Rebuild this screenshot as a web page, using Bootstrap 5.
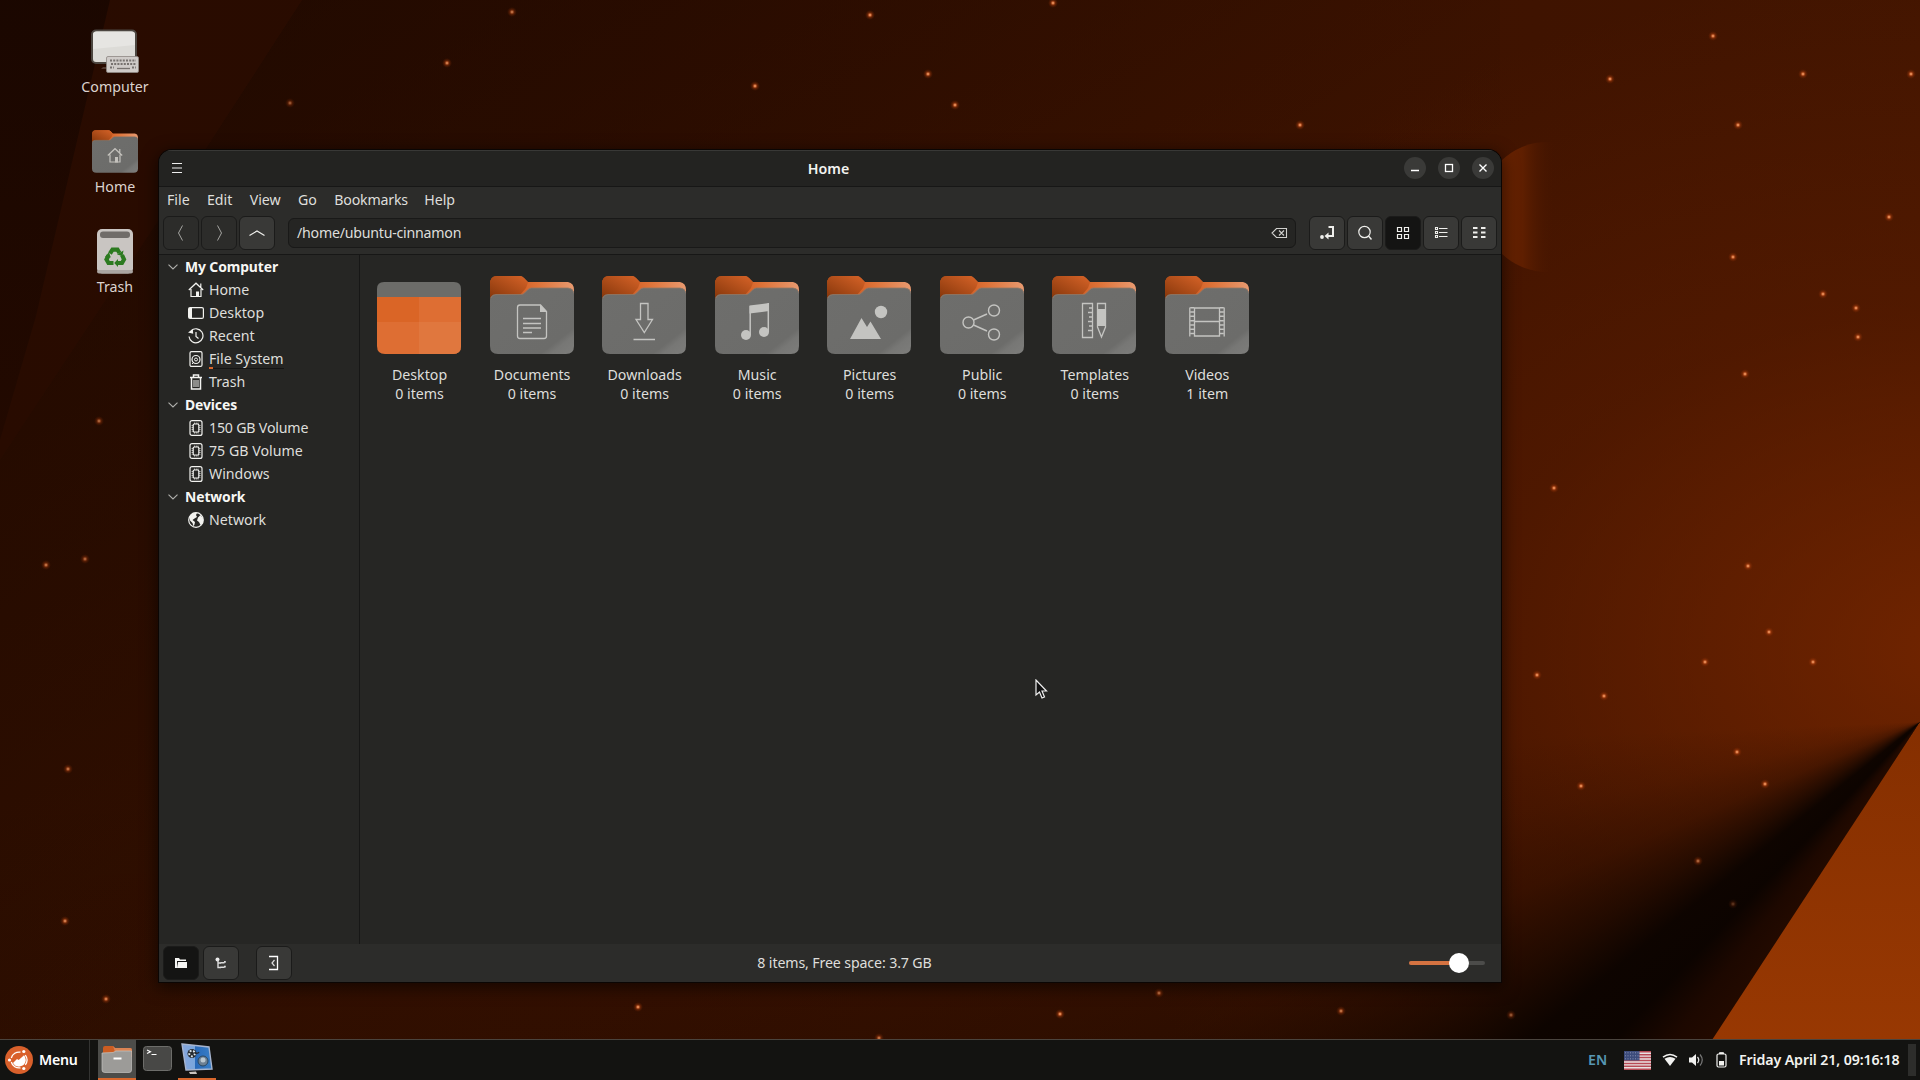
<!DOCTYPE html>
<html lang="en">
<head>
<meta charset="utf-8">
<title>Home</title>
<link href="https://cdn.jsdelivr.net/npm/bootstrap@5.3.0/dist/css/bootstrap.min.css" rel="stylesheet">
<style>
:root{--line:#171716;--bar:#2c2c2a;--pane:#262624;--accent:#d9672c}
html,body{height:100%;overflow:hidden}
body{font-family:"Noto Sans","Open Sans",sans-serif;font-size:14.2px;line-height:19px;color:#dededb;background:#350f00;width:1920px;height:1080px}
svg{display:block;flex:none}
.wallpaper,.crease{position:absolute;inset:0;width:1920px;height:1040px}
.wallpaper{z-index:-3;background:
 radial-gradient(ellipse 950px 680px at 1960px 650px,rgba(130,42,0,.72),rgba(110,34,0,.32) 50%,transparent),
 linear-gradient(90deg,#310f00 0,#361000 35%,#3b1200 60%,#3f1300 80%,#431500)}
.crease{z-index:-2;background:conic-gradient(at 1920px 722px,transparent 212deg,rgba(32,9,0,.95) 213deg,rgba(26,7,0,.95) 218deg,rgba(10,3,0,.97) 224deg,rgba(10,3,0,.95) 231deg,rgba(16,5,0,.7) 238deg,rgba(20,6,0,.35) 247deg,rgba(20,6,0,.13) 257deg,transparent 268deg)}
.scenery{position:absolute;inset:0;z-index:-1}
.launchers{position:absolute;left:75px;top:29px;width:80px}
.launcher{height:100px;color:#dcd3cf}
.launcher .pic{height:48px}
.win{position:absolute;left:159px;top:150px;width:1342px;height:832px;background:var(--pane);border-radius:13px 13px 0 0;box-shadow:0 0 0 1px #0b0604,0 4px 16px 2px rgba(0,0,0,.55);overflow:hidden}
.titlebar{height:37px;background:#232321;border-bottom:1px solid var(--line);box-shadow:inset 0 1px #383836;color:#f3f3f0;padding:0 7px 0 8px}
.titleside{width:116px;gap:12px}
.circ{width:22px;height:22px;border-radius:50%;background:#3a3a38}
.upper{background:var(--bar);height:68px;border-bottom:1px solid var(--line)}
.menus{height:26px;padding:0 0 2px 8px;gap:17.3px}
.menus span:last-child{margin-left:-1px}
.menus span:nth-child(n+2):nth-child(-n+4){position:static}
.tight{letter-spacing:-.2px}
.tools{height:41px;padding:3px 4px 0}
.btnrow{gap:2px}
.tbtn{width:36px;height:34px;border:1px solid #1b1b1a;border-radius:6px;background:#393937;color:#efefec;display:flex;align-items:center;justify-content:center;padding:0}
.tbtn.off{background:#2c2c2a;color:#a4a4a1}
.tbtn.on{background:#141413}
.paneltoggle{margin-left:17px}
.pathbox{height:30px;border:1px solid #191918;border-radius:6px;background:#252523;margin:2px 13px 0;padding:0 7px 0 8px;letter-spacing:-.24px}
.pathbox span{padding-bottom:2px}
.side{width:201px;border-right:1px solid var(--line)}
.srow{height:23px;display:flex;align-items:center;padding-left:29px}
.srow svg{margin-right:5px;color:#f2f2ef}
.shead{height:23px;display:flex;align-items:center;padding-left:9px;font-weight:700;color:#f7f7f4;font-size:13.9px;letter-spacing:-.1px}
.shead svg{margin-right:7px;color:#b0b0ad}
.usage{border-bottom:1px solid #151514;line-height:18px;margin-top:1px}
.usage:before{content:"";position:absolute;width:4px;height:2px;background:var(--accent);margin-top:17px}
.files{padding:21px 0 0 2.8px}
.file{width:112.54px;text-align:center}
.file svg{margin:0 auto 11px}
.caption{padding-left:1px}
.statusbar{height:38px;background:var(--bar);padding:0 16px 0 4px}
.summary{padding:0 12px 2px 0;letter-spacing:-.13px}
.zoomer{width:76px;height:20px}
.panel{position:absolute;left:0;top:1039px;width:1920px;height:41px;background:#131311;border-top:1px solid #4a443e}
.logo{margin-left:5px}
.menulabel{width:50px;margin-left:6px;padding-bottom:1px;letter-spacing:-.3px}
.divider{width:9px;border-left:1px solid #343432}
.task{width:38px;height:40px;display:flex;align-items:center;justify-content:center}
.task.wide{width:42px}
.task.open{border-bottom:2px solid var(--accent)}
.task.focus{background:#4c4c49}
.bold{font-weight:600}
.lang{color:#5797b4;width:36px;padding-bottom:1px}
.clock{width:169px;margin-left:12px;color:#f3f3f0;white-space:nowrap;letter-spacing:-.11px;padding-bottom:1px}
.gap11{margin-left:11px}
.peek{width:8px;height:32px;background:#2d2d2b;margin-right:4px}
.cursor{position:absolute;left:1035px;top:679px}
</style>
<script src="https://cdn.jsdelivr.net/npm/bootstrap@5.3.0/dist/js/bootstrap.bundle.min.js"></script>
</head>
<body>
<div class="wallpaper"></div>
<div class="crease"></div>
<svg class="scenery" width="1920" height="1040" viewBox="0 0 1920 1040">
 <defs>
  <radialGradient id="glow"><stop offset="0" stop-color="#ffc28a"/><stop offset=".22" stop-color="#e0703a" stop-opacity=".9"/><stop offset=".5" stop-color="#b0410f" stop-opacity=".42"/><stop offset="1" stop-color="#7a2500" stop-opacity="0"/></radialGradient>
  <linearGradient id="disc" x1="1500" x2="1556" y1="0" y2="0" gradientUnits="userSpaceOnUse"><stop offset="0" stop-color="#6a2300"/><stop offset=".4" stop-color="#622000" stop-opacity=".9"/><stop offset="1" stop-color="#451500" stop-opacity="0"/></linearGradient>
  <linearGradient id="fold" x1="0" y1="0" x2="0" y2="1"><stop offset="0" stop-color="#852f00"/><stop offset="1" stop-color="#983802"/></linearGradient>
  <linearGradient id="shade" x1="100" y1="100" x2="560" y2="800" gradientUnits="userSpaceOnUse"><stop offset="0" stop-color="#0a0200" stop-opacity=".42"/><stop offset="1" stop-color="#0a0200" stop-opacity="0"/></linearGradient>
  <linearGradient id="shade2" x1="0" y1="0" x2="0" y2="1"><stop offset="0" stop-color="#0a0200" stop-opacity=".45"/><stop offset="1" stop-color="#0a0200" stop-opacity=".2"/></linearGradient>
 </defs>
 <path d="M302 0 205 150 0 460V1040H1500V0Z" fill="url(#shade)"/>
 <path d="M0 0H302L205 150 0 460Z" fill="#0a0200" opacity=".22"/>
 <path d="M0 0H110L36 316 0 440Z" fill="url(#shade2)"/>
 <circle cx="1547" cy="207" r="65" fill="url(#disc)"/>
 <path d="M1920 722V1040H1712Z" fill="url(#fold)"/>
 <g id="stars"></g>
</svg>

<svg width="0" height="0" class="position-absolute">
 <defs>
  <linearGradient id="tab"><stop offset="0" stop-color="#b34f17"/><stop offset=".35" stop-color="#d26027"/><stop offset=".55" stop-color="#dd7136"/><stop offset="1" stop-color="#e89a70"/></linearGradient>
  <linearGradient id="tabdark" x1="0" y1="1" x2=".8" y2="0"><stop offset="0" stop-color="#7e3208"/><stop offset="1" stop-color="#cf5f25"/></linearGradient>
  <linearGradient id="front" x1="0" y1="0" x2="1" y2="1"><stop offset="0" stop-color="#6e6e6c"/><stop offset=".8" stop-color="#6c6c6a"/><stop offset=".86" stop-color="#777775"/><stop offset="1" stop-color="#7d7d7b"/></linearGradient>
  <symbol id="folder" viewBox="0 0 84 78">
   <path d="M0 8Q0 0 7 0H30Q32 0 34 2L38 6H78Q84 7 84 14V40H0Z" fill="url(#tab)"/>
   <path d="M0 8Q0 0 7 0H30Q32 0 34 2L38 6.500 36 12 30 19V26H0Z" fill="url(#tabdark)"/>
   <path d="M0 24Q0 18.500 6 18.500H31Q33 18.500 34.500 17L38 13.500Q39.500 12 41.500 12H78Q84 12 84 18V70Q84 78 76 78H8Q0 78 0 70Z" fill="url(#front)"/>
   <path d="M1 22Q2 18.500 6 18.500H31Q33 18.500 34.500 17L38 13.500Q39.500 12 41.500 12H78Q82 12 83.500 16" fill="none" stroke="#8f7868" stroke-width=".8"/>
  </symbol>
  <symbol id="house" viewBox="0 0 16 16"><path d="M.8 8 8 1.200 15.200 8M3 7v7.500h10V7M12.800 1.500v4" fill="none" stroke="currentColor" stroke-width="1.200"/><path d="M8 9.500h3V15H8z" fill="currentColor"/></symbol>
  <symbol id="drive" viewBox="0 0 16 16"><rect x="2" y=".6" width="12" height="14.800" rx="2" fill="none" stroke="currentColor" stroke-width="1.200"/><rect x="5.200" y="4" width="5.600" height="8" rx="1" fill="none" stroke="currentColor" stroke-width="1.200"/><path d="M6 3.200h4.500M6 12.900h4.500" stroke="currentColor" stroke-dasharray="1 .8"/><path d="M4.200 5v6.500M11.900 5v6.500" stroke="currentColor" stroke-dasharray="1 1"/></symbol>
  <symbol id="down" viewBox="0 0 10 6"><path d="M.5.700 5 5 9.500.700" fill="none" stroke="currentColor" stroke-width="1.100"/></symbol>
 </defs>
</svg>

<div class="launchers d-flex flex-column">
 <div class="launcher text-center"><div class="pic d-flex justify-content-center">
  <svg width="50" height="46" viewBox="0 0 50 46"><path d="M13 38h20v2H11Z" fill="#513a30"/><rect x="2" y="1.500" width="44" height="32.500" rx="4" fill="#dcdbd7" stroke="#4c4640" stroke-width="2"/><path d="M3 6Q3 2.500 7 2.500H41Q45 2.500 45 6V16L3 20Z" fill="#e6e5e2"/><rect x="16.500" y="27.500" width="32" height="16" rx="1.500" fill="#cfcbc8" stroke="#8e8884" stroke-width=".8"/><path d="M20 31.500h26M21 35h25M20 38.500h4M42 38.500h4" stroke="#77726f" stroke-width="1.800" stroke-dasharray="2 1.200"/><path d="M27 39.500h13" stroke="#77726f" stroke-width="1.300"/></svg>
 </div><div>Computer</div></div>
 <div class="launcher text-center"><div class="pic d-flex justify-content-center">
  <svg width="46" height="44"><use href="#folder" y="1" width="46" height="43"/><g color="#c3c1bc"><use href="#house" x="15" y="18.500" width="16" height="16"/></g></svg>
 </div><div>Home</div></div>
 <div class="launcher text-center"><div class="pic d-flex justify-content-center">
  <svg width="38" height="46" viewBox="0 0 38 46"><rect x="1" y="0" width="36" height="44.500" rx="5" fill="#c9c5c2"/><rect x="1" y="41" width="36" height="3.500" rx="2" fill="#aaa5a1"/><rect x="4" y="2.500" width="30" height="6.500" rx="3" fill="#706c69"/><g fill="none" stroke="#2c7a20" stroke-width="4.200"><path d="m14 24.500 2.500-3.800h5l2 3.300"/><path d="m26 26 2 4.500-2 3.500h-4.500"/><path d="M17.500 34h-5l-2-3.500 2-4"/></g><path d="m21 25.500 5.500 1.500 1-5.500zM22 30l-3.800 4 3.800 4zM9 28l5.700.500-1.700-5.500z" fill="#2c7a20"/></svg>
 </div><div>Trash</div></div>
</div>

<div class="win d-flex flex-column">
 <div class="titlebar d-flex align-items-center">
  <div class="titleside"><svg width="20" height="12" viewBox="0 0 20 12"><path d="M5 1.500h10M5 6h10M5 10.500h10" stroke="#eee" stroke-width="1.100"/></svg></div>
  <div class="flex-grow-1 text-center bold pe-1">Home</div>
  <div class="titleside d-flex justify-content-end">
   <div class="circ"><svg width="22" height="22"><path d="M7 13.500h8" stroke="#fff" stroke-width="1.300"/></svg></div>
   <div class="circ"><svg width="22" height="22"><rect x="7.500" y="7.500" width="7" height="7" fill="none" stroke="#fff" stroke-width="1.300"/></svg></div>
   <div class="circ"><svg width="22" height="22"><path d="m7.500 7.500 7 7m0-7-7 7" stroke="#fff" stroke-width="1.400"/></svg></div>
  </div>
 </div>
 <div class="upper">
  <div class="menus d-flex align-items-center"><span>File</span><span>Edit</span><span>View</span><span>Go</span><span class="tight">Bookmarks</span><span>Help</span></div>
  <div class="tools d-flex">
   <div class="btnrow d-flex">
    <button class="tbtn off"><svg width="8" height="18"><path d="M5.500 1.500 1.500 9l4 7.500" fill="none" stroke="currentColor"/></svg></button>
    <button class="tbtn off"><svg width="8" height="18"><path d="m2.500 1.500 4 7.500-4 7.500" fill="none" stroke="currentColor"/></svg></button>
    <button class="tbtn"><svg width="16" height="8"><path d="M.5 6.500 8 2l7.500 4.500" fill="none" stroke="currentColor" stroke-width="1.200"/></svg></button>
   </div>
   <div class="pathbox flex-grow-1 d-flex align-items-center justify-content-between"><span>/home/ubuntu-cinnamon</span>
    <svg width="17" height="12"><path d="M5.500 1.500h10v9h-10L1 6ZM8 3.500l5 5m0-5-5 5" fill="none" stroke="#d0d0cd" stroke-width="1.100"/></svg></div>
   <div class="btnrow d-flex">
    <button class="tbtn"><svg width="16" height="16"><path d="M9.500 2H14v9H7.500" fill="none" stroke="currentColor" stroke-width="2"/><path d="m9.500 7.500-4 3.500 4 3.500z" fill="currentColor"/><circle cx="3" cy="12" r="1.900" fill="currentColor"/></svg></button>
    <button class="tbtn"><svg width="16" height="16"><circle cx="7.500" cy="7" r="5.700" fill="none" stroke="currentColor" stroke-width="1.200"/><path d="m11.500 11 3 3.500" stroke="currentColor" stroke-width="1.400"/></svg></button>
    <button class="tbtn on"><svg width="16" height="16"><path d="M2.500 2.500h4v4h-4zM9.500 2.500h4v4h-4zM2.500 9.500h4v4h-4zM9.500 9.500h4v4h-4z" fill="none" stroke="currentColor" stroke-width="1.200"/></svg></button>
    <button class="tbtn"><svg width="16" height="16"><path d="M2.500 2.500h2v2h-2zM2.500 6.500h2v2h-2zM2.500 10.500h2v2h-2zM6 3.500h8.500M6 7.500h8.500M6 11.500h8.500" fill="none" stroke="currentColor" stroke-width="1.100"/></svg></button>
    <button class="tbtn"><svg width="16" height="16"><path d="M2 3h4.500M10 3h4.500M2 7.500h4.500M10 7.500h4.500M2 12h4.500M10 12h4.500" stroke="currentColor" stroke-width="1.800"/></svg></button>
   </div>
  </div>
 </div>
 <div class="d-flex flex-grow-1">
  <div class="side">
   <div class="shead"><svg width="10" height="6"><use href="#down"/></svg><span>My Computer</span></div>
   <div class="srow"><svg width="16" height="16"><use href="#house"/></svg>Home</div>
   <div class="srow"><svg width="16" height="16"><rect x=".6" y="2.600" width="14.800" height="10.800" rx="1.500" fill="none" stroke="currentColor" stroke-width="1.200"/><path d="M1 3h3v10H1z" fill="currentColor"/></svg>Desktop</div>
   <div class="srow"><svg width="16" height="16"><path d="M3 2.800A7 7 0 1 1 1 8.500" fill="none" stroke="currentColor" stroke-width="1.200"/><path d="M8 4v4.500l2.500 2" fill="none" stroke="currentColor" stroke-width="1.200"/><path d="M0 4.500 4.800 1l.4 4.700z" fill="currentColor"/></svg>Recent</div>
   <div class="srow"><svg width="16" height="16"><rect x="2" y=".6" width="12" height="14.800" rx="1.500" fill="none" stroke="currentColor" stroke-width="1.200"/><circle cx="8" cy="8.500" r="4" fill="none" stroke="currentColor" stroke-width="1.200"/><circle cx="8" cy="8.500" r="1.500" fill="none" stroke="currentColor"/><path d="m4 13 2-2" stroke="currentColor"/></svg><span class="usage">File System</span></div>
   <div class="srow"><svg width="16" height="16"><path d="M2 3.500h12M5.500 3V1h5v2M3.500 4v11h9V4" fill="none" stroke="currentColor" stroke-width="1.500"/><path d="M6 6v7M8 6v7M10 6v7" stroke="currentColor"/></svg>Trash</div>
   <div class="shead"><svg width="10" height="6"><use href="#down"/></svg><span>Devices</span></div>
   <div class="srow"><svg width="16" height="16"><use href="#drive"/></svg><span class="tight">150 GB Volume</span></div>
   <div class="srow"><svg width="16" height="16"><use href="#drive"/></svg>75 GB Volume</div>
   <div class="srow"><svg width="16" height="16"><use href="#drive"/></svg>Windows</div>
   <div class="shead"><svg width="10" height="6"><use href="#down"/></svg><span>Network</span></div>
   <div class="srow"><svg width="16" height="16"><circle cx="8" cy="8" r="7.300" fill="#262624" stroke="currentColor" stroke-width="1.200"/><path d="M1.500 5Q4 0 9 1L8 3 9 5 6.500 6.500 4.500 8 7 10 6.500 12.500 5.500 14.500 4.500 11 2 8.500ZM10 5.500 12.500 3 15 6.500V11L12.500 13 11 10 9 8.500Z" fill="currentColor"/></svg>Network</div>
  </div>
  <div class="files d-flex align-items-start">
   <div class="file"><svg width="84" height="78"><path d="M0 13Q0 6 7 6H77Q84 6 84 13V24H0Z" fill="#6c6c69"/><path d="M0 21H84V70Q84 78 76 78H8Q0 78 0 70Z" fill="#de6e33"/><path d="M0 21H42V46H0Z" fill="#da6526"/><path d="M42 46H84V70Q84 78 76 78H42Z" fill="#e0773e"/></svg><div class="caption">Desktop<br>0 items</div></div>
   <div class="file"><svg width="84" height="78"><use href="#folder"/><g fill="none" stroke="#c4c4c1" stroke-width="1.300"><path d="M50.500 29H30q-2.500 0-2.500 2.500v28.500q0 2.500 2.500 2.500h24q2.500 0 2.500-2.500V35.500ZM33 42.500h18M33 47.500h18M33 52h18M33 56.500h9"/></g><path d="M50 28.500v7.500h7z" fill="#c4c4c1"/></svg><div class="caption">Documents<br>0 items</div></div>
   <div class="file"><svg width="84" height="78"><use href="#folder"/><path d="M38.500 27.500h7.500v16h4.500L42.300 56.500 34 43.500h4.500ZM31.500 63.500h21.500" fill="none" stroke="#c4c4c1" stroke-width="1.300"/></svg><div class="caption">Downloads<br>0 items</div></div>
   <div class="file"><svg width="84" height="78"><use href="#folder"/><g fill="#c4c4c1"><circle cx="31" cy="59" r="5"/><circle cx="49" cy="56" r="5"/><path d="M34.500 29.500 54 27v8L34.500 37.500Z"/></g><path d="M35.200 59V30M53.300 56V27" stroke="#c4c4c1" stroke-width="1.500"/></svg><div class="caption">Music<br>0 items</div></div>
   <div class="file"><svg width="84" height="78"><use href="#folder"/><g fill="#c4c4c1"><circle cx="54" cy="36" r="6.200"/><path d="M23 63 34.500 42 40 51 43.500 45.500 54 63Z"/></g></svg><div class="caption">Pictures<br>0 items</div></div>
   <div class="file"><svg width="84" height="78"><use href="#folder"/><g fill="none" stroke="#c4c4c1" stroke-width="1.400"><circle cx="28.500" cy="46.500" r="5.500"/><circle cx="54" cy="34.500" r="5.500"/><circle cx="54" cy="58.500" r="5.500"/><path d="M33.500 44 47 38M33.500 49 47 55"/></g></svg><div class="caption">Public<br>0 items</div></div>
   <div class="file"><svg width="84" height="78"><use href="#folder"/><g fill="none" stroke="#c4c4c1" stroke-width="1.300"><path d="M30.500 27.500h10v34h-10zM40 32h-3M40 36.500h-4M40 41h-3M40 45.500h-4M40 50h-3M40 54.500h-4M45.500 27.500h8V51L49.500 61 45.500 51Z"/></g><path d="M45 33h9v17h-9z" fill="#c4c4c1"/></svg><div class="caption">Templates<br>0 items</div></div>
   <div class="file"><svg width="84" height="78"><use href="#folder"/><g fill="none" stroke="#c4c4c1" stroke-width="1.300"><path d="M29.500 32h25v28h-25zM30 45.500h24M24.800 31.500v29M59.200 31.500v29"/><path d="M27.200 31v30M56.800 31v30" stroke-width="4" stroke-dasharray="1.500 2.800"/></g></svg><div class="caption">Videos<br>1 item</div></div>
  </div>
 </div>
 <div class="statusbar d-flex align-items-center">
  <button class="tbtn on"><svg width="14" height="12"><path d="M1 1h4l1 1.500h6V4H3v7H1Z" fill="#f5f5f3"/><path d="M4 5h9v6H3Z" fill="#f5f5f3"/></svg></button>
  <button class="tbtn ms-1"><svg width="12" height="12"><circle cx="2.500" cy="2.500" r="2" fill="#eee"/><path d="M3 3v7.500h3M3 6h3" stroke="#ddd" fill="none" stroke-width="1.400"/><path d="M5.500 5h4v1.500h-4zM5.500 9.500h4V11h-4zM9 4h1.800v1.800H9zM9 8.700h1.800v1.800H9z" fill="#ddd"/></svg></button>
  <button class="tbtn paneltoggle"><svg width="12" height="16"><path d="M1 1.500h8.500v13H1" fill="none" stroke="#fff" stroke-width="1.300"/><path d="M6.500 5 4 8l2.500 3" fill="none" stroke="#ddd" stroke-width="1.200"/></svg></button>
  <div class="summary flex-grow-1 text-center">8 items, Free space: 3.7 GB</div>
  <svg class="zoomer" viewBox="0 0 76 20"><path d="M2 10h72" stroke="#4c4c4a" stroke-width="4" stroke-linecap="round"/><path d="M2 10h44" stroke="#d57341" stroke-width="4" stroke-linecap="round"/><circle cx="50" cy="10" r="10" fill="#fff"/></svg>
 </div>
</div>

<svg class="cursor" width="13" height="21" viewBox="0 0 13 21"><path d="M1 1V16L4.500 13 7 19 9.500 18 7 12H11.500Z" fill="#111" stroke="#eee" stroke-width="1.200"/></svg>

<div class="panel d-flex align-items-center">
 <svg class="logo" width="28" height="28"><circle cx="14" cy="14" r="14" fill="#d9602b"/><path d="M6.300 12A8 8 0 0 1 15.500 6.200M20.300 9.200A8 8 0 0 1 20.300 18.800M15.500 21.800A8 8 0 0 1 6.300 16" fill="none" stroke="#fff" stroke-width="1.300"/><path d="m8 17 4-4 1.700 1L19 9.200A7 7 0 0 1 20.800 14 7 7 0 0 1 10 19.500Z" fill="#fff"/><circle cx="4.500" cy="14" r="1.600" fill="#fff"/><circle cx="18.800" cy="5.500" r="1.600" fill="#fff"/><circle cx="18.800" cy="22.500" r="1.600" fill="#fff"/></svg>
 <div class="menulabel bold text-white">Menu</div>
 <div class="divider h-100"></div>
 <div class="task open focus"><svg width="32" height="29" viewBox="0 0 32 29"><path d="M2 3Q2 1 4 1H12L14 3H29Q31 3 31 5V12H2Z" fill="#cc5d22"/><path d="M12 1 14 3H29Q31 3 31 5V7H14Z" fill="#db8454"/><path d="M1 8 12 7.500 15 6H30.500V25Q30.500 27.500 28 27.500H4Q1 27.500 1 25Z" fill="#9c9b98" stroke="#c4c3c0" stroke-width=".7"/><path d="M12.500 12.500h8v2h-8z" fill="#fff"/></svg></div>
 <div class="task wide pb-1"><svg width="29" height="25"><rect x=".5" y=".5" width="28" height="24" rx="3" fill="#484846" stroke="#6d6d6a"/><path d="m4 4 3.500 1.700L4 7.500M8.500 8.500h5" fill="none" stroke="#fff" stroke-width="1.100"/></svg></div>
 <div class="task open"><svg width="32" height="33" viewBox="0 0 32 33"><defs><linearGradient id="scr"><stop offset="0" stop-color="#86a5dc"/><stop offset=".42" stop-color="#79a6dc"/><stop offset=".44" stop-color="#2869b8"/><stop offset="1" stop-color="#397fc7"/></linearGradient></defs><path d="M1 1 28 4 31 26 5 27Z" fill="url(#scr)" stroke="#a7b5cf" stroke-width="1.400"/><circle cx="11" cy="10.500" r="4.500" fill="#262b30"/><circle cx="11" cy="10.500" r="2.800" fill="none" stroke="#dce7ee" stroke-width="2" stroke-dasharray="1.800 1.700"/><path d="M14 10q3 1 4-1" stroke="#252a33" fill="none" stroke-width="1.500"/><circle cx="22" cy="18" r="5" fill="#6d8093" stroke="#294761"/><circle cx="22" cy="17" r="2.500" fill="#bac7d0"/><path d="m8 29 7-.5 1 2.500H9Z" fill="#c9c4bf"/></svg></div>
 <div class="ms-auto d-flex align-items-center h-100">
  <div class="lang bold">EN</div>
  <svg width="27" height="19" viewBox="0 0 27 19"><path fill="#e8e2e2" d="M0 0h27v19H0z"/><path d="M0 .8h27M0 3.700h27M0 6.600h27M0 9.500h27M0 12.400h27M0 15.300h27M0 18.200h27" stroke="#b84a55" stroke-width="1.460"/><path fill="#3c4c7c" d="M0 0h15.500v9.500H0z"/><path d="M1 1.800h14M1 4.800h14M1 7.800h14" stroke="#8791b3" stroke-width="1" stroke-dasharray="1 1.500"/></svg>
  <svg class="gap11" width="16" height="14"><path d="M1 4.200Q8-1.200 15 4.200" fill="none" stroke="#f2f2f0" stroke-width="1.500"/><path d="M2.500 5.800Q8 2 13.500 5.800L8 13Z" fill="#f2f2f0"/></svg>
  <svg class="gap11" width="16" height="16"><path d="M0 5.500h3L7 2v12L3 10.500H0Z" fill="#f2f2f0"/><path d="M8.500 5q2.500 3 0 6" fill="none" stroke="#ddd" stroke-width="1.300"/><path d="M11 2.500q4.500 5.500 0 11" fill="none" stroke="#777" stroke-width="1.200"/></svg>
  <svg class="gap11" width="11" height="16"><path d="M3.500 2V.700h4V2" fill="#f2f2f0" stroke="#f2f2f0"/><rect x="1" y="2" width="9" height="13" rx="1.500" fill="none" stroke="#f2f2f0" stroke-width="1.200"/><path d="M3 9h5v4.500H3z" fill="#f2f2f0"/></svg>
  <div class="clock bold">Friday April 21, 09:16:18</div>
  <div class="peek"></div>
 </div>
</div>

<script>
/* Points of light on the wallpaper: x, y, strength */
const points=[[1713,36],[1610,79],[1803,74],[1911,74],[1738,125],[1889,217],[1733,257],[1823,294],[1856,308],[1858,337],[1745,374],[1554,488],[1748,566],[1769,632],[1705,662],[1813,662],[1537,675],[1604,696],[1737,752],[1765,784],[1581,786],[1698,861,.7],[1733,904,.35],[1341,1011,.8],[1511,1015,.6],[1060,1014],[1159,993,.8],[879,1038,.8],[447,63,.9],[290,103,.6],[512,12,.8],[870,15],[755,86],[928,74],[955,105],[1053,3],[1300,125],[99,421,.7],[46,565,.8],[85,559,.7],[68,769,.8],[65,921,.9],[106,999,.9],[638,1007]];
document.getElementById('stars').innerHTML=points.map(([x,y,o=1])=>`<circle cx="${x}" cy="${y}" r="5" fill="url(#glow)" opacity="${o}"/>`).join('');
</script>
</body>
</html>
